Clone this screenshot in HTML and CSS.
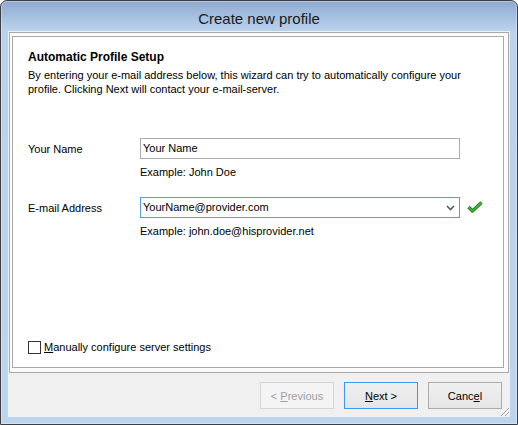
FILE: index.html
```html
<!DOCTYPE html>
<html>
<head>
<meta charset="utf-8">
<title>Create new profile</title>
<link rel="stylesheet" href="styles.css">
</head>
<body>
<div class="window">
  <div class="titlebar">Create new profile</div>
  <div class="client">
    <div class="content-outer">
      <div class="content">
        <div class="heading">Automatic Profile Setup</div>
        <div class="intro">By entering your e-mail address below, this wizard can try to automatically configure your profile. Clicking Next will contact your e-mail-server.</div>

        <div class="row row-name">
          <span class="label">Your Name</span>
          <div class="field">Your Name</div>
        </div>
        <div class="example">Example: John Doe</div>

        <div class="row row-email">
          <span class="label">E-mail Address</span>
          <div class="field combo">
            <span>YourName@provider.com</span>
            <svg class="chevron" width="9" height="6" viewBox="0 0 9 6"><path d="M1 1 L4.5 4.5 L8 1" fill="none" stroke="#5a5a5a" stroke-width="1.6"/></svg>
          </div>
          <svg class="check" width="16" height="12" viewBox="0 0 16 12"><path d="M1.5 6 L5.5 10 L14.5 1.5" fill="none" stroke="#1f7a1f" stroke-width="3.2" stroke-linejoin="round"/><path d="M1.5 6 L5.5 10 L14.5 1.5" fill="none" stroke="#47b83a" stroke-width="1.6" stroke-linejoin="round"/></svg>
        </div>
        <div class="example">Example: john.doe@hisprovider.net</div>

        <label class="checkrow">
          <span class="box"></span>
          <span><u>M</u>anually configure server settings</span>
        </label>
      </div>
    </div>
    <div class="footer">
      <div class="btn disabled"><span>&lt; <u>P</u>revious</span></div>
      <div class="btn default"><span><u>N</u>ext &gt;</span></div>
      <div class="btn"><span>Canc<u>e</u>l</span></div>
      <span class="grip"></span>
    </div>
  </div>
</div>
</body>
</html>
```

FILE: styles.css
```css
html, body {
  margin: 0;
  padding: 0;
  background: #ffffff;
}

.window {
  width: 518px;
  height: 425px;
  box-sizing: border-box;
  border: 1px solid #3b3f45;
  border-radius: 7px 7px 0 0;
  background: linear-gradient(to bottom, #8faad0 0px, #a9c3e2 18px, #bad2ec 30px, #bcd4ee 100%);
  box-shadow: inset 0 0 0 1px rgba(255, 255, 255, 0.35);
  display: flex;
  flex-direction: column;
  font-family: "Liberation Sans", Arial, sans-serif;
  font-size: 11px;
  color: #000;
  overflow: hidden;
}

.titlebar {
  height: 30px;
  line-height: 36px;
  text-align: center;
  font-family: "Liberation Sans", Arial, sans-serif;
  font-size: 15px;
  color: #1a1a1a;
}

.client {
  flex: 1;
  margin: 0 7px 7px 7px;
  background: #f0f0f0;
  display: flex;
  flex-direction: column;
  position: relative;
}

.content-outer {
  margin: 1px 1px 0 1px;
  border: 1px solid #a9a9a9;
  padding: 3px 4px 4px 2px;
  background: #fbfbfb;
  height: 341px;
  box-sizing: border-box;
  display: flex;
}

.content {
  flex: 1;
  border: 1px solid #a9a9a9;
  background: #ffffff;
  padding: 13px 15px 13px 15px;
  display: flex;
  flex-direction: column;
}

.heading {
  font-weight: bold;
  font-size: 12px;
  line-height: 14px;
}

.intro {
  margin-top: 4px;
  line-height: 14px;
  width: 450px;
}

.row {
  display: flex;
  align-items: center;
  height: 21px;
}

.row-name {
  margin-top: 42px;
}

.row-email {
  margin-top: 18px;
}

.label {
  width: 112px;
}

.field {
  width: 320px;
  height: 21px;
  box-sizing: border-box;
  border: 1px solid #abadb3;
  padding: 0 2px;
  line-height: 19px;
  background: #fff;
}

.combo {
  border-color: #569de5;
  display: flex;
  justify-content: space-between;
  align-items: center;
}

.chevron {
  margin-right: 2px;
}

.check {
  margin-left: 7px;
  margin-top: -1px;
}

.example {
  margin-top: 6px;
  margin-left: 112px;
  line-height: 14px;
}

.checkrow {
  margin-top: auto;
  display: flex;
  align-items: center;
  height: 14px;
}

.box {
  width: 13px;
  height: 13px;
  box-sizing: border-box;
  border: 1px solid #333;
  background: #fff;
  margin-right: 3px;
}

.footer {
  flex: 1;
  display: flex;
  justify-content: flex-end;
  gap: 10px;
  padding: 9px 8px 0 0;
}

.btn {
  width: 74px;
  height: 27px;
  box-sizing: border-box;
  border: 1px solid #acacac;
  background: linear-gradient(to bottom, #f0f0f0, #e5e5e5);
  display: flex;
  align-items: center;
  justify-content: center;
  color: #000;
}

.btn.default {
  border-color: #3c99f0;
}

.btn.disabled {
  border-color: #d5d5d5;
  background: #f4f4f4;
  color: #a0a0a0;
}

.grip {
  position: absolute;
  right: 1px;
  bottom: 1px;
  width: 10px;
  height: 10px;
  background: repeating-linear-gradient(135deg, transparent 0 2px, #a6a6a6 2px 3px);
  clip-path: polygon(100% 0, 100% 100%, 0 100%);
}
```
